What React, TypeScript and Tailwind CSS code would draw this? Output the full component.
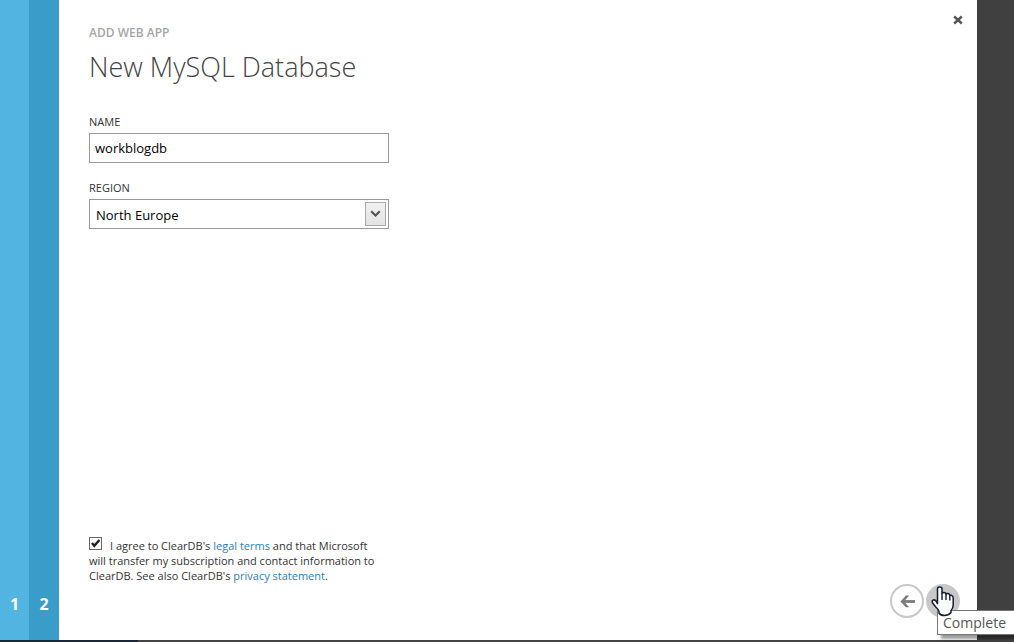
import { useState } from "react";

function CloseIcon() {
  return (
    <svg width="10" height="10" viewBox="0 0 10 10" aria-hidden="true">
      <path d="M1.2 1.5 L8.8 8.5 M8.8 1.5 L1.2 8.5" stroke="#555" strokeWidth="2.4" fill="none" />
    </svg>
  );
}

function BackIcon() {
  return (
    <svg width="34" height="34" viewBox="0 0 34 34" aria-hidden="true">
      <circle cx="17" cy="17" r="16" fill="#fff" stroke="#c8c8c8" strokeWidth="2" />
      <path d="M25 17.5 H12.5" stroke="#7b7b7b" strokeWidth="2.8" fill="none" />
      <path d="M10.4 17.5 L16 11.6 H19.2 L14 17.5 L19.2 23.2 H16 Z" fill="#7b7b7b" />
    </svg>
  );
}

function HandCursor() {
  return (
    <svg width="24" height="31" viewBox="0 0 24 31" aria-hidden="true">
      <path
        d="M6.5 17.5 V3 Q6.5 1 8.7 1 Q11 1 11 3 V7.5 Q11.5 6.5 13 6.5 Q15 6.5 15 8.5 Q15.5 7.5 16.8 7.5 Q18.6 7.5 18.8 9.5 Q19.3 9 20.3 9.2 Q22.2 9.6 22.2 12 V19 Q22.2 22 20 24.5 V26.5 Q17.5 29.5 13.5 29.5 Q9.5 29.5 8 27 V25.5 Q7.5 23.5 4.8 21 Q2.8 18.5 1.5 16.8 Q0.8 15 2 14.2 Q3.8 13.2 5.3 15.5 Z"
        fill="#fff"
        stroke="#171a2c"
        strokeWidth="1.5"
        strokeLinejoin="round"
      />
      <path d="M11 7.5 V14 M15 8.5 V14 M18.8 9.5 V14.5" stroke="#171a2c" strokeWidth="1.4" fill="none" />
    </svg>
  );
}

export default function App() {
  const [name, setName] = useState("workblogdb");
  const [agreed, setAgreed] = useState(true);

  return (
    <div className="flex h-screen flex-col overflow-hidden bg-[#404040] font-['Open_Sans',sans-serif] text-[#333]">
      <div className="flex min-h-0 flex-1">
        <nav aria-label="Steps" className="flex text-base leading-6 font-bold text-white">
          <button type="button" className="flex w-[29px] items-end justify-center bg-[#52b5e1] pb-6">1</button>
          <button type="button" aria-current="step" className="flex w-[30px] items-end justify-center bg-[#3a9dc9] pb-6">2</button>
        </nav>

        <main className="flex flex-1 flex-col bg-white pt-[14px] pr-[14px] pb-[22px] pl-[30px]">
          <header className="flex items-start justify-between">
            <div className="pt-[11px]">
              <p className="text-xs leading-4 font-semibold text-[#a6a6a6]">ADD WEB APP</p>
              <h1 className="mt-2 text-[27px] leading-9 font-light text-[#444]">New MySQL Database</h1>
            </div>
            <button type="button" aria-label="Close" className="flex h-3 w-[10px] items-center">
              <CloseIcon />
            </button>
          </header>

          <div className="mt-[29px] w-[300px]">
            <label htmlFor="name" className="block text-[11px] leading-4">NAME</label>
            <input
              id="name"
              value={name}
              onChange={(e) => setName(e.target.value)}
              className="mt-[3px] block h-[30px] w-full border border-[#999] bg-white px-[5px] text-[13px] text-black outline-none"
            />
            <label htmlFor="region" className="mt-[17px] block text-[11px] leading-4">REGION</label>
            <div className="relative mt-[3px]">
              <select
                id="region"
                defaultValue="North Europe"
                className="block h-[30px] w-full appearance-none border border-[#999] bg-white px-[6px] pt-[3px] text-[13px] text-black outline-none"
              >
                <option>North Europe</option>
                <option>West Europe</option>
              </select>
              <span className="pointer-events-none absolute top-[3px] right-[3px] flex h-6 w-[21px] items-center justify-center border border-[#aaa] bg-linear-to-b from-[#f1f1f1] to-[#e3e3e3]">
                <svg width="11" height="8" viewBox="0 0 11 8" aria-hidden="true">
                  <path d="M1.2 1.2 L5.5 5.5 L9.8 1.2" fill="none" stroke="#555" strokeWidth="2.2" />
                </svg>
              </span>
            </div>
          </div>

          <div className="mt-auto w-[300px] text-[11px] leading-[15px]">
            <span className="relative mr-2 inline-block h-[13px] w-[13px]">
              <input
                id="agree"
                type="checkbox"
                checked={agreed}
                onChange={(e) => setAgreed(e.target.checked)}
                className="block h-[13px] w-[13px] appearance-none border border-[#666] bg-white"
              />
              {agreed && (
                <svg className="pointer-events-none absolute inset-0" width="13" height="13" viewBox="0 0 13 13" aria-hidden="true">
                  <path d="M3 6 L5.3 8.8 L10.4 3" fill="none" stroke="#222" strokeWidth="2.4" />
                </svg>
              )}
            </span>
            <label htmlFor="agree">I agree to ClearDB's </label>
            <a href="#legal" className="text-[#2e80b8]">legal terms</a> and that Microsoft
            <br />
            will transfer my subscription and contact information to
            <br />
            ClearDB. See also ClearDB's <a href="#privacy" className="text-[#2e80b8]">privacy statement</a>.
          </div>

          <footer className="mt-px flex justify-end gap-[2px] pr-[3px]">
            <button type="button" aria-label="Back" className="h-[34px] w-[34px]">
              <BackIcon />
            </button>
            <div className="relative h-[34px] w-[34px]">
              <button type="button" aria-label="Complete" className="block h-[34px] w-[34px] rounded-full bg-[#c8c8c8]" />
              <div role="tooltip" className="absolute top-[26px] left-[11px] flex h-[25px] w-[80px] items-center border border-[#767676] bg-white pl-[5px] text-sm text-[#555] shadow-[4px_4px_3px_rgba(0,0,0,0.4)]">
                Complete
              </div>
              <span className="pointer-events-none absolute top-[2px] left-[5px]">
                <HandCursor />
              </span>
            </div>
          </footer>
        </main>

        <div className="w-[37px] bg-[#404040]" />
      </div>
      <div className="flex h-[2px]">
        <div className="w-[138px] bg-[#182836]" />
        <div className="flex-1 bg-[#464344]" />
      </div>
    </div>
  );
}
